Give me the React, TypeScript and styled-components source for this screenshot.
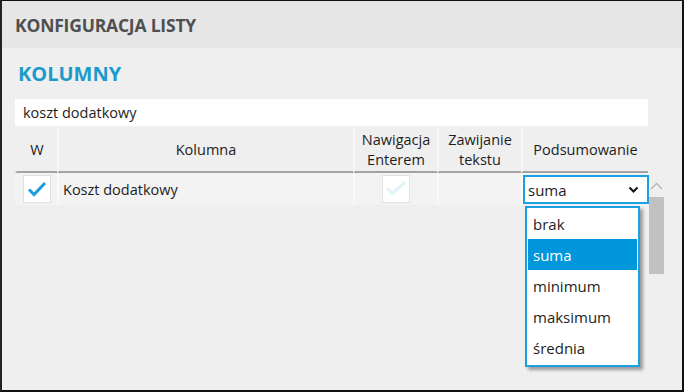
import React from "react";
import styled, { createGlobalStyle } from "styled-components";

const GlobalStyle = createGlobalStyle`
  html, body {
    margin: 0;
    padding: 0;
    background: #efefef;
  }
  * {
    box-sizing: border-box;
  }
`;

const FONT = `"Open Sans", "Noto Sans", "Liberation Sans", sans-serif`;

const Frame = styled.div`
  width: 684px;
  height: 392px;
  border-top: 1px solid #111;
  border-left: 2px solid #222;
  border-right: 2px solid #111;
  border-bottom: 2px solid #111;
  background: #efefef;
  font-family: ${FONT};
  color: #1e1e1e;
  overflow: hidden;
  display: flex;
  flex-direction: column;
`;

const Header = styled.div`
  height: 47px;
  flex-shrink: 0;
  background: #e6e6e6;
  display: flex;
  align-items: center;
  padding-left: 13px;
  font-size: 17.5px;
  font-weight: 700;
  color: #4f4f4f;
  letter-spacing: -0.2px;
`;

const Body = styled.div`
  flex: 1;
  padding: 13px 0 0 13px;
  display: flex;
  flex-direction: column;
`;

const SectionTitle = styled.div`
  font-size: 20px;
  font-weight: 700;
  color: #1b9bcb;
  line-height: 26px;
  padding-left: 3px;
  margin-bottom: 12px;
`;

const Search = styled.div`
  width: 633px;
  height: 27px;
  background: #fff;
  display: flex;
  align-items: center;
  padding-left: 8px;
  font-size: 14.5px;
  margin-bottom: 2px;
`;

const TableArea = styled.div`
  display: flex;
  align-items: flex-start;
`;

const Table = styled.div`
  width: 633px;
  display: grid;
  grid-template-columns: 42px 296px 84px 84px 127px;
`;

const HeadCell = styled.div<{ $first?: boolean }>`
  height: 45px;
  display: flex;
  align-items: center;
  justify-content: center;
  text-align: center;
  font-size: 14.5px;
  line-height: 20px;
  color: #1e1e1e;
  border-left: 2px solid ${(p) => (p.$first ? "transparent" : "#f7f7f7")};
  border-bottom: 2px solid #a3a3a3;
`;

const Cell = styled.div<{ $first?: boolean; $align?: string }>`
  height: 32px;
  display: flex;
  align-items: center;
  justify-content: ${(p) => p.$align || "flex-start"};
  background: #f3f3f3;
  border-left: 2px solid ${(p) => (p.$first ? "transparent" : "#f9f9f9")};
  font-size: 14.5px;
  position: relative;
`;

const NameText = styled.span`
  padding-left: 4px;
`;

const CheckBox = styled.div`
  width: 28px;
  height: 28px;
  background: #fff;
  border: 1px solid #e2e2e2;
  display: flex;
  align-items: center;
  justify-content: center;
`;

const Select = styled.div`
  position: absolute;
  left: 0;
  top: 2px;
  width: 126px;
  height: 29px;
  background: #fff;
  border: 2px solid #1ba1e2;
  display: flex;
  align-items: center;
  justify-content: space-between;
  padding: 0 8px 0 3px;
  font-size: 15px;
`;

const Dropdown = styled.div`
  position: absolute;
  left: 2px;
  top: 33px;
  width: 115px;
  background: #fff;
  border: 2px solid #1ba1e2;
  padding: 0 0 2px 0;
  box-shadow: 3px 3px 3px rgba(0, 0, 0, 0.35);
  z-index: 5;
`;

const Option = styled.div<{ $active?: boolean }>`
  height: 31px;
  margin: 0 1px;
  display: flex;
  align-items: center;
  padding-left: 5px;
  font-size: 15px;
  background: ${(p) => (p.$active ? "#0096dc" : "transparent")};
  color: ${(p) => (p.$active ? "#fff" : "#1e1e1e")};
`;

const Scrollbar = styled.div`
  width: 17px;
  margin-top: 47px;
  display: flex;
  flex-direction: column;
  align-items: center;
`;

const ScrollUp = styled.div`
  height: 22px;
  display: flex;
  align-items: center;
  justify-content: center;
`;

const Thumb = styled.div`
  width: 15px;
  height: 77px;
  background: #c1c1c1;
`;

const options = ["brak", "suma", "minimum", "maksimum", "średnia"];

const BlueCheck = () => (
  <svg width="20" height="16" viewBox="0 0 20 16">
    <path d="M2 8.5 L7 13.5 L18 2" fill="none" stroke="#1a9ee0" strokeWidth="3" />
  </svg>
);

const FaintCheck = () => (
  <svg width="22" height="16" viewBox="0 0 22 16">
    <path
      d="M2 8.5 L7.5 14 L20 2 L18.5 1 L7.5 11.5 L3.5 7.5 Z"
      fill="none"
      stroke="#bfe6f6"
      strokeWidth="1"
      strokeLinejoin="round"
    />
  </svg>
);

const Chevron = () => (
  <svg width="11" height="8" viewBox="0 0 11 8">
    <path d="M1.5 1.5 L5.5 5.5 L9.5 1.5" fill="none" stroke="#111" strokeWidth="2" />
  </svg>
);

const Caret = () => (
  <svg width="13" height="8" viewBox="0 0 13 8">
    <path d="M1 7 L6.5 1.5 L12 7" fill="none" stroke="#b9b9b9" strokeWidth="1.5" />
  </svg>
);

const App: React.FC = () => {
  return (
    <>
      <GlobalStyle />
      <Frame>
        <Header>KONFIGURACJA LISTY</Header>
        <Body>
          <SectionTitle>KOLUMNY</SectionTitle>
          <Search>koszt dodatkowy</Search>
          <TableArea>
            <Table>
              <HeadCell $first>W</HeadCell>
              <HeadCell>Kolumna</HeadCell>
              <HeadCell>
                Nawigacja
                <br />
                Enterem
              </HeadCell>
              <HeadCell>
                Zawijanie
                <br />
                tekstu
              </HeadCell>
              <HeadCell>Podsumowanie</HeadCell>

              <Cell $first $align="center">
                <CheckBox>
                  <BlueCheck />
                </CheckBox>
              </Cell>
              <Cell>
                <NameText>Koszt dodatkowy</NameText>
              </Cell>
              <Cell $align="center">
                <CheckBox>
                  <FaintCheck />
                </CheckBox>
              </Cell>
              <Cell />
              <Cell>
                <Select>
                  <span>suma</span>
                  <Chevron />
                </Select>
                <Dropdown>
                  {options.map((o) => (
                    <Option key={o} $active={o === "suma"}>
                      {o}
                    </Option>
                  ))}
                </Dropdown>
              </Cell>
            </Table>
            <Scrollbar>
              <ScrollUp>
                <Caret />
              </ScrollUp>
              <Thumb />
            </Scrollbar>
          </TableArea>
        </Body>
      </Frame>
    </>
  );
};

export default App;
